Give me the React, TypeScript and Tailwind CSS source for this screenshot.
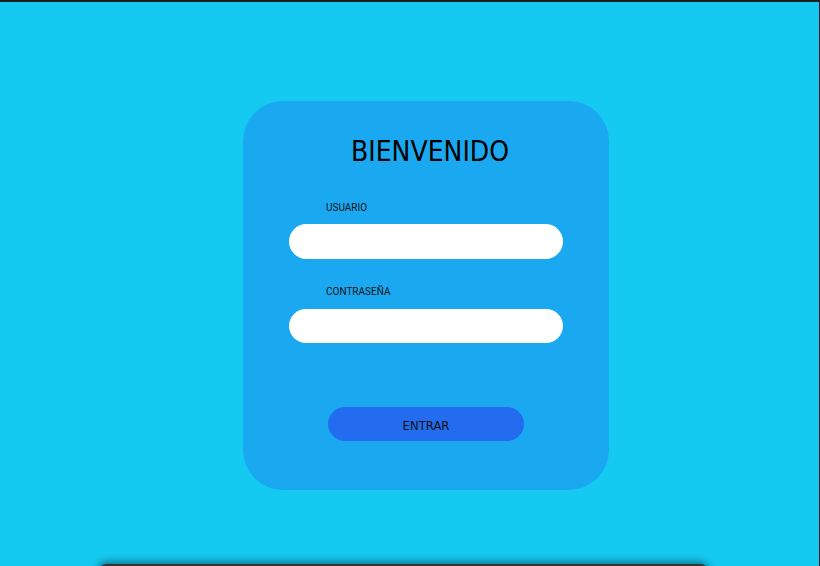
export default function App() {
  return (
    <div className="h-[566px] overflow-hidden bg-[#15caf1] border-t-2 border-r border-[#1b1d1e]">
      <div className="h-[562px] pt-[99px] pl-[243px]">
        <div className="w-[366px] h-[389px] rounded-[40px] bg-[#1aa9f1] flex flex-col items-center pt-[33px]">
          <h1
            className="text-[28px] leading-[36px] text-black pl-[8px]"
            style={{ fontFamily: '"DejaVu Sans Condensed", "DejaVu Sans", sans-serif' }}
          >
            BIENVENIDO
          </h1>
          <form className="w-[274px] flex flex-col mt-[32px]" style={{ fontFamily: 'Roboto, sans-serif' }}>
            <label className="text-[10px] leading-[12px] text-[#111] pl-[37px]">USUARIO</label>
            <input type="text" className="mt-[10px] h-[35px] rounded-full bg-white outline-none px-4" />
            <label className="text-[10px] leading-[12px] text-[#111] pl-[37px] mt-[27px]">CONTRASEÑA</label>
            <input type="password" className="mt-[11px] h-[34px] rounded-full bg-white outline-none px-4" />
            <button
              type="button"
              className="self-center mt-[64px] w-[196px] h-[34px] pt-[3px] rounded-full bg-[#236cf0] text-[13px] text-[#111]"
              style={{ fontFamily: '"DejaVu Sans Condensed", "DejaVu Sans", sans-serif' }}
            >
              ENTRAR
            </button>
          </form>
        </div>
      </div>
      <div className="mx-[97px] mr-[109px] h-10 rounded-t-[10px] bg-[#333] shadow-[0_-2px_8px_rgba(0,0,0,0.45)]" />
    </div>
  );
}
